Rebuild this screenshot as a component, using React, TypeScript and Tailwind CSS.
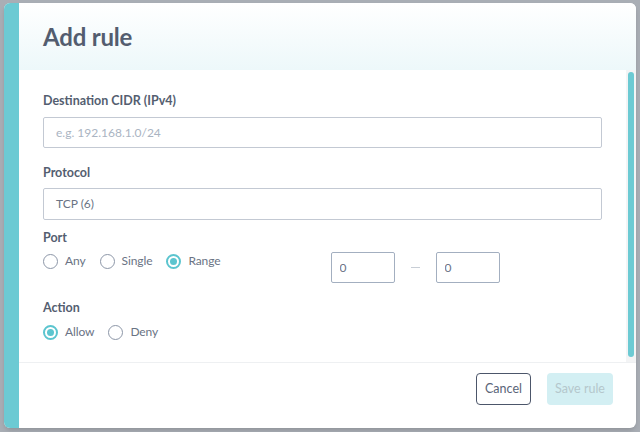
import { useState } from "react";

function Radio({ label, checked, onClick }: { label: string; checked: boolean; onClick: () => void }) {
  return (
    <button type="button" onClick={onClick} className="flex items-center gap-[7px]">
      <span
        className={
          checked
            ? "w-[15px] h-[15px] rounded-full border-2 border-[#5cc5cf] flex items-center justify-center"
            : "w-[15px] h-[15px] rounded-full border-[1.5px] border-[#8c96a7]"
        }
      >
        {checked && <span className="w-[7px] h-[7px] rounded-full bg-[#5cc5cf]" />}
      </span>
      <span className="text-[12px] leading-[16px] text-[#6a7384] tracking-[-0.1px]">{label}</span>
    </button>
  );
}

export default function App() {
  const [port, setPort] = useState("range");
  const [action, setAction] = useState("allow");

  return (
    <div
      className="w-[640px] h-[432px] bg-[#a9aeb5] pt-[3px] pl-[4px] overflow-hidden"
      style={{ fontFamily: "Lato, 'Noto Sans', sans-serif" }}
    >
      <div className="w-[632px] h-[425px] rounded-[6px] bg-white flex overflow-hidden shadow-md">
        <div className="w-[15px] bg-[#6ccad3]" />

        <div className="flex-1 flex flex-col">
          <div className="h-[67px] px-[24px] flex items-center bg-gradient-to-b from-white to-[#edf8fa]">
            <h1 className="text-[24px] font-bold text-[#535d6f] tracking-[-0.2px]">Add rule</h1>
          </div>

          <div className="h-[292px] flex">
            <div className="flex-1 px-[24px] pt-[23px]">
              <label className="block text-[12.5px] leading-[16px] font-bold text-[#545e70]">
                Destination CIDR (IPv4)
              </label>
              <input
                className="mt-[8px] w-full h-[31px] border border-[#c3c9d3] rounded-[2px] px-[12px] text-[12px] text-[#6a7384] placeholder:text-[#aab4c2] outline-none"
                placeholder="e.g. 192.168.1.0/24"
              />

              <label className="block mt-[17px] text-[12.5px] leading-[16px] font-bold text-[#545e70]">
                Protocol
              </label>
              <div className="mt-[7px] w-full h-[32px] border border-[#c3c9d3] rounded-[2px] px-[12px] flex items-center text-[12px] text-[#6a7384]">
                TCP (6)
              </div>

              <label className="block mt-[10px] text-[12.5px] leading-[16px] font-bold text-[#545e70]">
                Port
              </label>
              <div className="mt-[6px] grid grid-cols-2 gap-4">
                <div className="flex items-start gap-[14px] pt-[1px]">
                  <Radio label="Any" checked={port === "any"} onClick={() => setPort("any")} />
                  <Radio label="Single" checked={port === "single"} onClick={() => setPort("single")} />
                  <Radio label="Range" checked={port === "range"} onClick={() => setPort("range")} />
                </div>
                <div className="flex items-center">
                  <input
                    defaultValue="0"
                    className="w-[64px] h-[31px] border border-[#a3afc0] rounded-[2px] px-[8px] text-[12px] text-[#6a7384] outline-none"
                  />
                  <span className="w-[41px] flex justify-center">
                    <span className="w-[9px] h-px bg-[#c8ced6]" />
                  </span>
                  <input
                    defaultValue="0"
                    className="w-[64px] h-[31px] border border-[#a3afc0] rounded-[2px] px-[8px] text-[12px] text-[#6a7384] outline-none"
                  />
                </div>
              </div>

              <label className="block mt-[17px] text-[12.5px] leading-[16px] font-bold text-[#545e70]">
                Action
              </label>
              <div className="mt-[8px] flex gap-[14px]">
                <Radio label="Allow" checked={action === "allow"} onClick={() => setAction("allow")} />
                <Radio label="Deny" checked={action === "deny"} onClick={() => setAction("deny")} />
              </div>
            </div>

            <div className="w-[10px] bg-[#f3f4f5] pt-[2px] pb-[5px] flex justify-center">
              <div className="w-[6px] h-full rounded-full bg-[#6ccad3]" />
            </div>
          </div>

          <div className="flex-1 border-t border-[#eef0f2] flex justify-end items-start gap-[16px] pt-[10px] pr-[23px]">
            <button className="w-[55px] h-[32px] border-[1.5px] border-[#4c566a] rounded-[4px] text-[12.5px] text-[#5a6478]">
              Cancel
            </button>
            <button
              disabled
              className="w-[66px] h-[32px] rounded-[4px] bg-[#d3eff3] text-[12.5px] text-[#b5c7cc]"
            >
              Save rule
            </button>
          </div>
        </div>
      </div>
    </div>
  );
}
